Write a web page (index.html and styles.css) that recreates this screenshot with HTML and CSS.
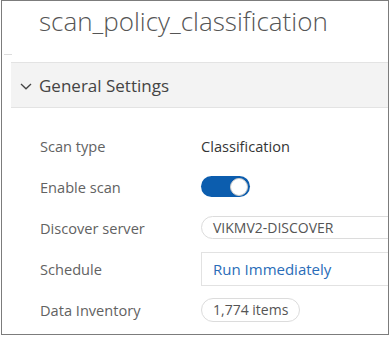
FILE: index.html
```html
<!DOCTYPE html>
<html lang="en">
<head>
<meta charset="utf-8">
<title>scan_policy_classification</title>
<link rel="stylesheet" href="styles.css">
</head>
<body>
<div class="frame">
  <header class="title-bar">
    <h1 class="title">scan_policy_classification</h1>
  </header>
  <div class="tab-line"></div>
  <section class="panel">
    <div class="panel-head">
      <svg class="chevron" width="12" height="7" viewBox="0 0 12 7" aria-hidden="true">
        <polyline points="1,1 6,5.8 11,1" fill="none" stroke="#444" stroke-width="1.3"/>
      </svg>
      <span class="panel-title">General Settings</span>
    </div>
    <div class="rows">
      <div class="row">
        <span class="label">Scan type</span>
        <span class="value">Classification</span>
      </div>
      <div class="row">
        <span class="label">Enable scan</span>
        <span class="toggle"><span class="knob"></span></span>
      </div>
      <div class="row">
        <span class="label">Discover server</span>
        <span class="pill-input">VIKMV2-DISCOVER</span>
      </div>
      <div class="row">
        <span class="label">Schedule</span>
        <span class="box-input">Run Immediately</span>
      </div>
      <div class="row">
        <span class="label">Data Inventory</span>
        <span class="chip">1,774 items</span>
      </div>
    </div>
  </section>
</div>
</body>
</html>
```

FILE: styles.css
```css
html, body {
  margin: 0;
  padding: 0;
  background: #ffffff;
}

body {
  font-family: "Open Sans", "Noto Sans", sans-serif;
}

.frame {
  box-sizing: border-box;
  width: 388px;
  height: 335px;
  margin-left: 1px;
  border: 1px solid #7c7c7c;
  overflow: hidden;
  display: flex;
  flex-direction: column;
}

.title-bar {
  height: 53px;
  display: flex;
  align-items: flex-start;
  padding-left: 37px;
}

.title {
  margin: 0;
  margin-top: 2px;
  font-size: 26px;
  font-weight: 300;
  line-height: 36px;
  color: #555555;
}

.tab-line {
  width: 8px;
  height: 1px;
  margin-left: 2px;
  background: #dddddd;
}

.panel {
  margin-top: 7px;
  margin-left: 9px;
  width: 460px;
}

.panel-head {
  height: 44px;
  display: flex;
  align-items: center;
  gap: 7px;
  padding-left: 9px;
  background: #f3f3f3;
  border-top: 1px solid #e3e3e3;
  border-bottom: 1px solid #e3e3e3;
}

.chevron {
  display: block;
  margin-top: 2px;
}

.panel-title {
  font-size: 17px;
  color: #444444;
}

.rows {
  padding-top: 17px;
  padding-left: 29px;
  display: flex;
  flex-direction: column;
}

.row {
  height: 41px;
  display: grid;
  grid-template-columns: 161px 1fr;
  align-items: center;
}

.label {
  font-size: 14.6px;
  color: #626262;
}

.value {
  font-size: 14.6px;
  color: #353535;
}

.toggle {
  box-sizing: border-box;
  width: 49px;
  height: 21px;
  border-radius: 11px;
  background: #0c5dae;
  display: flex;
  justify-content: flex-end;
  align-items: center;
  padding-right: 2px;
}

.knob {
  box-sizing: border-box;
  width: 18px;
  height: 18px;
  border-radius: 50%;
  background: #ffffff;
  border: 1px solid #c9c9c9;
}

.pill-input {
  box-sizing: border-box;
  height: 23px;
  display: flex;
  align-items: center;
  padding-left: 11px;
  border: 1px solid #dcdcdc;
  border-radius: 12px;
  font-size: 14px;
  color: #555555;
}

.box-input {
  box-sizing: border-box;
  height: 34px;
  display: flex;
  align-items: center;
  padding-left: 11px;
  border: 1px solid #e2e2e2;
  font-size: 15px;
  color: #2a6cb8;
}

.chip {
  justify-self: start;
  box-sizing: border-box;
  width: 99px;
  height: 24px;
  display: flex;
  align-items: center;
  padding-left: 11px;
  border: 1px solid #dcdcdc;
  border-radius: 12px;
  font-size: 14px;
  color: #555555;
}
```
